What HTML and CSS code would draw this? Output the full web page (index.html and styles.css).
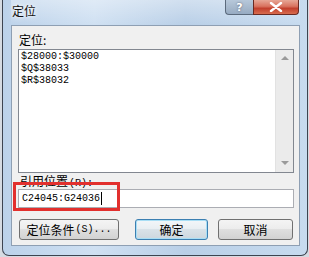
FILE: index.html
```html
<!DOCTYPE html>
<html lang="zh">
<head>
<meta charset="utf-8">
<title>定位</title>
<link rel="stylesheet" href="styles.css">
</head>
<body>
<div class="window">
  <div class="titlebar">
    <span class="title">定位</span>
    <div class="caption-btns">
      <div class="cbtn help">?</div>
      <div class="cbtn close">
        <svg width="14" height="10" viewBox="0 0 14 10"><path d="M2 1 L12 9 M12 1 L2 9" stroke="#fff" stroke-width="2.4" stroke-linecap="round"/></svg>
      </div>
    </div>
  </div>
  <div class="content">
    <div class="label">定位:</div>
    <div class="listbox">
      <div class="items">
        <div class="item">$28000:$30000</div>
        <div class="item">$Q$38033</div>
        <div class="item">$R$38032</div>
      </div>
      <div class="scrollbar">
        <span class="arrow up"></span>
        <span class="arrow down"></span>
      </div>
    </div>
    <div class="label label2">引用位置<span class="mono-s">(R):</span></div>
    <div class="input"><span class="mono">C24045:G24036</span><span class="caret"></span></div>
    <div class="buttons">
      <div class="btn btn-special">定位条件<span class="mono-s">(S)...</span></div>
      <div class="btn-group">
        <div class="btn btn-ok">确定</div>
        <div class="btn btn-cancel">取消</div>
      </div>
    </div>
  </div>
  <div class="highlight"></div>
</div>
</body>
</html>
```
FILE: styles.css
```css
html, body {
  margin: 0;
  padding: 0;
}
body {
  width: 309px;
  height: 257px;
  overflow: hidden;
  background: #d6dbe2;
  font-family: "Noto Sans CJK SC", "Liberation Sans", sans-serif;
  font-size: 12px;
  color: #000;
}
.window {
  position: relative;
  box-sizing: border-box;
  width: 306px;
  height: 256px;
  margin-left: 2px;
  border: 1px solid #3d4450;
  border-top: none;
  border-radius: 0 0 7px 7px;
  padding: 0 7px 9px 8px;
  display: flex;
  flex-direction: column;
  background: linear-gradient(90deg, #bcd2ea 0%, #cfe0f2 30%, #b9cfe7 60%, #c7dbef 100%);
}
.titlebar {
  height: 25px;
  display: flex;
  align-items: flex-start;
  background: linear-gradient(180deg, rgba(255,255,255,0.35), rgba(255,255,255,0));
}
.title {
  padding: 4px 0 0 1px;
  font-size: 12px;
  line-height: 14px;
  color: #111;
  text-shadow: 0 0 6px #fff, 0 0 3px #fff;
}
.caption-btns {
  margin-left: auto;
  display: flex;
  height: 15px;
  margin-right: 1px;
}
.cbtn {
  box-sizing: border-box;
  height: 15px;
  border: 1px solid #5b6a7c;
  border-top: none;
  display: flex;
  align-items: center;
  justify-content: center;
}
.help {
  width: 28px;
  border-radius: 0 0 0 4px;
  border-right: none;
  background: linear-gradient(180deg, #b7c8da 0%, #a6b8cc 55%, #97abc2 100%);
  color: #fff;
  font-family: "DejaVu Sans", sans-serif;
  font-weight: bold;
  font-size: 11px;
  text-shadow: 0 0 2px #556;
}
.close {
  width: 46px;
  border-color: #6a2a22;
  border-radius: 0 0 4px 0;
  background: linear-gradient(180deg, #e7a796 0%, #d9735f 45%, #c2402d 60%, #d86c4e 100%);
}
.content {
  flex: 1;
  box-sizing: border-box;
  background: #f0f0f0;
  border: 1px solid #8e9fb3;
  padding: 7px 5px 0 6px;
  display: flex;
  flex-direction: column;
}
.label {
  line-height: 14px;
  height: 14px;
  padding-left: 1px;
}
.label2 {
  margin-top: 1px;
  padding-left: 2px;
}
.mono-s {
  font-family: "Liberation Mono", "DejaVu Sans Mono", monospace;
  font-size: 10px;
  margin-left: 1px;
}
.listbox {
  margin-top: 2px;
  height: 124px;
  box-sizing: border-box;
  border: 1px solid #828790;
  background: #fff;
  display: flex;
}
.items {
  flex: 1;
  padding: 1px 0 0 2px;
}
.item, .mono {
  font-family: "Liberation Mono", "DejaVu Sans Mono", monospace;
  font-size: 10px;
  line-height: 12px;
  height: 12px;
}
.scrollbar {
  width: 17px;
  background: #ebebeb;
  border-left: 1px solid #e2e2e2;
  display: flex;
  flex-direction: column;
  justify-content: space-between;
  align-items: center;
  padding: 6px 0 7px;
}
.arrow {
  width: 0;
  height: 0;
  border-left: 4px solid transparent;
  border-right: 4px solid transparent;
}
.arrow.up { border-bottom: 4px solid #9a9a9a; }
.arrow.down { border-top: 4px solid #9a9a9a; }
.input {
  margin-top: 1px;
  height: 19px;
  box-sizing: border-box;
  border: 1px solid #abadb3;
  background: #fff;
  display: flex;
  align-items: center;
  padding-left: 3px;
}
.caret {
  width: 1px;
  height: 13px;
  background: #000;
  margin-left: 1px;
}
.buttons {
  margin-top: 11px;
  display: flex;
  justify-content: space-between;
  padding-right: 1px;
}
.btn-group {
  display: flex;
  gap: 10px;
}
.btn {
  box-sizing: border-box;
  height: 21px;
  border: 1px solid #707070;
  border-radius: 3px;
  background: linear-gradient(180deg, #f4f4f4 0%, #ececec 49%, #dfdfdf 50%, #d2d2d2 100%);
  display: flex;
  align-items: center;
  justify-content: center;
  line-height: 14px;
}
.btn-special {
  width: 100px;
  margin-left: 1px;
}
.btn-ok {
  width: 73px;
  border-color: #3c7fb1;
  box-shadow: inset 0 0 0 1px #a8def5;
  background: linear-gradient(180deg, #f2f6f9 0%, #e8eef2 49%, #d9e2e8 50%, #cdd7de 100%);
}
.btn-cancel {
  width: 75px;
}
.highlight {
  position: absolute;
  left: 10px;
  top: 182px;
  width: 107px;
  height: 29px;
  box-sizing: border-box;
  border: 3px solid #e2302e;
}
```
